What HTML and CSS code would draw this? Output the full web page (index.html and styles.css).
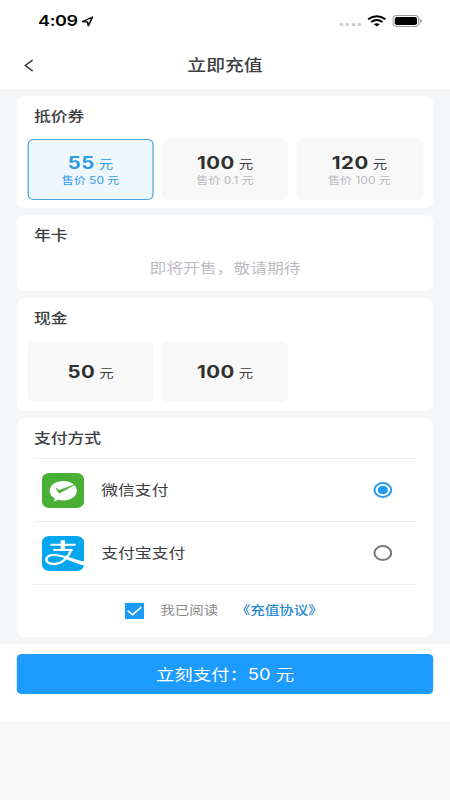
FILE: index.html
```html
<!DOCTYPE html>
<html lang="zh-CN">
<head>
<meta charset="utf-8">
<title>立即充值</title>
<link rel="stylesheet" href="styles.css">
</head>
<body>
<div class="app">
  <div class="status">
    <span class="time">4:09</span>
    <svg class="loc" width="10" height="11" viewBox="0 0 10 11"><path d="M.8 5.6 9.1 1 5.6 9.7 4.9 6Z" fill="none" stroke="#111" stroke-width="1.4" stroke-linejoin="round"/></svg>
    <span class="dots"><i></i><i></i><i></i><i></i></span>
    <svg class="wifi" width="16" height="12" viewBox="0 0 16 12"><g fill="none" stroke="#000" stroke-width="1.9"><path d="M.8 4.3Q8-1.6 15.2 4.3"/><path d="M3.3 7Q8 3.2 12.7 7"/></g><path d="M5.5 9.2Q8 7.2 10.5 9.2L8 11.6Z"/></svg>
    <svg class="battery" width="25" height="12" viewBox="0 0 25 12"><rect x=".5" y=".5" width="21.5" height="11" rx="3.2" fill="#fff" stroke="#999"/><rect x="2" y="2" width="18.5" height="8" rx="1.8"/><path d="M23.1 4v4q1.3-.6 1.3-2t-1.3-2" fill="#888"/></svg>
  </div>
  <header class="header">
    <svg class="back" width="8" height="13" viewBox="0 0 8 13"><path d="M7.200 1 1 6.500l6.200 5.500" fill="none" stroke="#333" stroke-width="1.3"/></svg>
    <h1>立即充值</h1>
  </header>
  <main class="content">
    <section class="card coupons">
      <h2>抵价券</h2>
      <div class="options">
        <div class="option selected"><p class="price"><b>55</b> 元</p><p class="sale">售价 50 元</p></div>
        <div class="option"><p class="price"><b>100</b> 元</p><p class="sale">售价 0.1 元</p></div>
        <div class="option"><p class="price"><b>120</b> 元</p><p class="sale">售价 100 元</p></div>
      </div>
    </section>
    <section class="card year">
      <h2>年卡</h2>
      <p class="empty">即将开售，敬请期待</p>
    </section>
    <section class="card cash">
      <h2>现金</h2>
      <div class="options">
        <div class="option"><p class="price"><b>50</b> 元</p></div>
        <div class="option"><p class="price"><b>100</b> 元</p></div>
      </div>
    </section>
    <section class="card pay">
      <h2>支付方式</h2>
      <div class="method">
        <svg width="35" height="35" viewBox="0 0 35 35"><rect width="35" height="35" rx="6" fill="#49b035"/><path d="M17.800 8C11.300 8 6.400 12.300 6.400 17.700c0 3.200 1.700 6 4.300 7.800L10.100 28.400l3.400-1.700c1.300.5 2.800.7 4.300.7 6.400 0 11.300-4.300 11.300-9.700S24.200 8 17.800 8Z" fill="#fff"/><path d="M11.600 15.300 14.500 17.300 28 11.200 14.300 20.200Z" fill="#49b035" stroke="#49b035" stroke-width=".5" stroke-linejoin="round"/></svg>
        <span>微信支付</span>
        <svg class="radio" width="16" height="16" viewBox="0 0 16 16"><circle cx="8" cy="8" r="7" fill="#fff" stroke="#2e9df0" stroke-width="1.800"/><circle cx="8" cy="8" r="4.300" fill="#1e9bf5"/></svg>
      </div>
      <div class="method">
        <svg width="35" height="35" viewBox="0 0 35 35"><rect width="35" height="35" rx="6" fill="#04a6ef"/><g fill="none" stroke="#fff"><path d="M7 8.700H28M9.400 14.100H25.500" stroke-width="2"/><path d="M17.400 4.200V14" stroke-width="3.700"/><path d="M24.400 13.800C22.500 20 17.500 28.200 9.800 28 2.300 27.800 1.600 20.500 8 19.100 15.500 17.700 23.500 23.500 35 26.800" stroke-width="2.100"/></g><path d="M19 20.900C24 22.800 29.500 24.500 35 25.400V29.600C30 28 23.500 25 18 22Z" fill="#fff"/></svg>
        <span>支付宝支付</span>
        <svg class="radio" width="16" height="16" viewBox="0 0 16 16"><circle cx="8" cy="8" r="7" fill="#fff" stroke="#7a7a7a" stroke-width="1.800"/></svg>
      </div>
      <div class="agree">
        <svg width="16" height="16" viewBox="0 0 16 16"><path d="M0 0H16V16H0Z" fill="#1e9bf8"/><path d="M2.400 7.800 6.500 11.700 13.800 4" fill="none" stroke="#fff" stroke-width="1.500"/></svg>
        <span>我已阅读</span><a>《充值协议》</a>
      </div>
    </section>
  </main>
  <footer class="footer"><button>立刻支付：50 元</button></footer>
</div>
</body>
</html>
```
FILE: styles.css
```css
* { box-sizing: border-box; margin: 0; padding: 0; }
html, body { width: 450px; height: 800px; overflow: hidden; background: #f9f9f9; }
.app {
  width: 375px;
  height: 800px;
  display: flex;
  flex-direction: column;
  transform: scaleX(1.2);
  transform-origin: 0 0;
  font-family: Inter, "Noto Sans CJK SC", sans-serif;
  color: #3c3e42;
}
svg { display: block; flex: none; }
.status { height: 42px; background: #fff; display: flex; align-items: center; padding: 0 23.500px 0 31.700px; }
.time { font-size: 15px; font-weight: 600; color: #000; line-height: 20px; letter-spacing: -.3px; }
.loc { margin-left: 3.600px; }
.dots { display: flex; gap: 2px; margin-left: auto; padding-top: 7px; }
.dots i { width: 3.200px; height: 3px; border-radius: 1px; background: #ccc; }
.wifi { margin-left: 4.600px; }
.battery { margin-left: 4.500px; }
.header { height: 48px; background: #fff; border-bottom: 1px solid #f5f5f6; display: flex; align-items: center; padding-left: 19.500px; }
h1 { flex: 1; margin-right: 27.500px; text-align: center; font-size: 15.700px; font-weight: 500; line-height: 24px; }
.content { height: 554px; background: #f5f6f8; padding: 6px 14px 0; display: flex; flex-direction: column; gap: 7px; }
.card { background: #fff; border-radius: 7px; flex: none; }
h2 { font-size: 14px; font-weight: 500; line-height: 20px; padding: 10px 14.300px 0; }
.coupons { height: 112px; }
.year { height: 76px; }
.cash { height: 113px; }
.pay { height: 219px; }
.options { display: grid; grid-template-columns: repeat(3, 1fr); gap: 6.200px; padding: 13px 8.500px 0; }
.option { height: 61px; border-radius: 5px; background: #f8f8f8; display: flex; flex-direction: column; align-items: center; justify-content: center; }
.price { font-size: 12px; line-height: 22px; white-space: pre; padding-top: 3px; }
.price b { font-size: 17px; font-weight: 700; color: #303030; letter-spacing: .4px; }
.sale { font-size: 10px; line-height: 14px; color: #b9b9be; margin: -3px 0 3px; }
.selected { background: #eef6fe; border: 1px solid #48a3df; color: #309be6; }
.selected b, .selected .sale { color: #309be6; }
.empty { text-align: center; font-size: 14px; line-height: 20px; color: #bdbdc1; padding-top: 13px; }
.method { height: 63px; margin: 0 14px; border-bottom: 1px solid #eeeff0; display: flex; align-items: center; padding: 0 20px 0 7px; }
.pay h2 { height: 41px; margin: 0 14px; padding: 10px .300px 0; border-bottom: 1px solid #eeeff0; }
.method span { margin-left: 14.400px; font-size: 14px; line-height: 20px; }
.radio { margin-left: auto; }
.agree { height: 52px; display: flex; align-items: center; padding-left: 90px; font-size: 12.100px; line-height: 18px; }
.agree span { margin-left: 13.500px; color: #888; }
.agree a { margin-left: 14.500px; color: #2588ce; font-weight: 500; }
.footer { height: 77px; background: #fff; padding: 10px 14px 0; }
button { display: block; width: 100%; height: 40px; border: 0; border-radius: 4px; background: #1e9bff; color: #fff; font: 400 15.300px/41px Inter, "Noto Sans CJK SC", sans-serif; }
```
